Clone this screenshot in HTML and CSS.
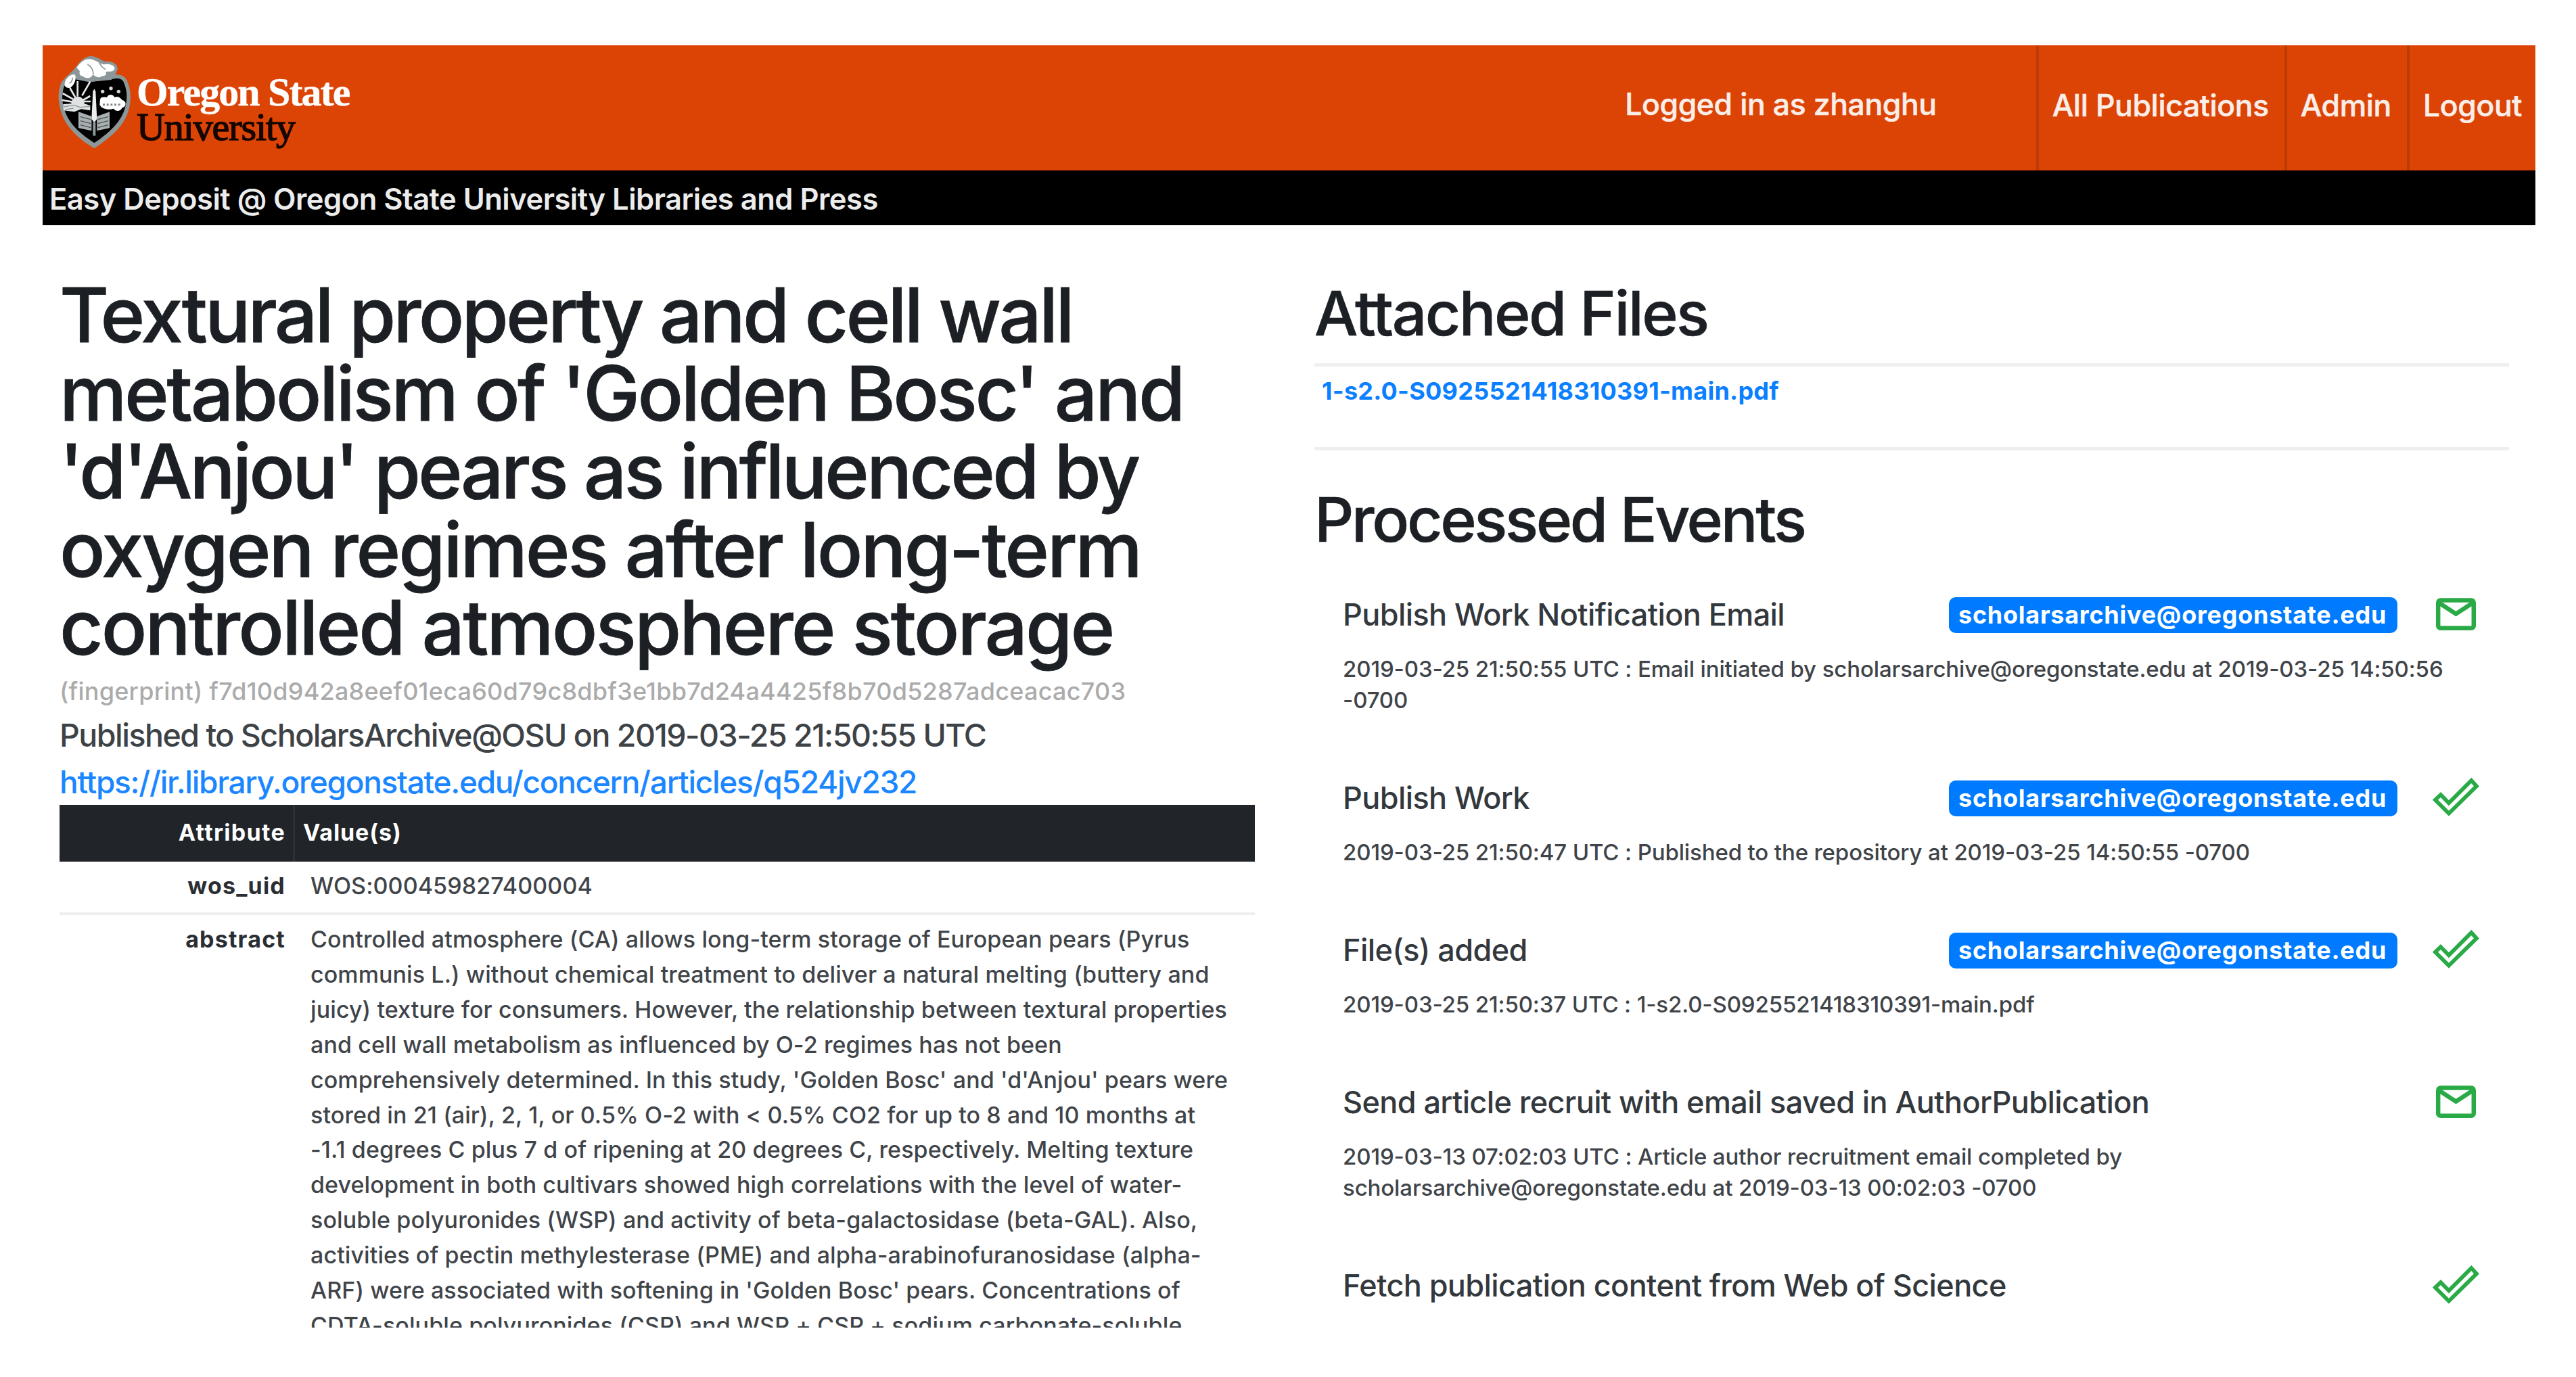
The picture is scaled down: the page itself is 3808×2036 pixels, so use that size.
FILE: index.html
```html
<!DOCTYPE html>
<html lang="en">
<head>
<meta charset="utf-8">
<title>Easy Deposit @ Oregon State University Libraries and Press</title>
<link rel="stylesheet" href="styles.css">
</head>
<body>
<svg class="defs" aria-hidden="true">
  <symbol id="mail" viewBox="0 0 80 70">
    <rect x="14.2" y="13.4" width="52.6" height="41.4" rx="3.5"/>
    <path d="M15 17 40.5 33.6 66 17"/>
  </symbol>
  <symbol id="check" viewBox="0 0 80 70">
    <path d="M10 37.7 18 30 30 42.3 63.3 9 71 17.3 30 57.7Z"/>
  </symbol>
</svg>
<div class="page">
  <header class="topbar">
    <a class="brand">
      <svg class="crest" viewBox="108 68 324 414">
        <path fill="#8b9799" d="M118 200C122 178 150 158 178 130C200 100 222 70 256 71C285 74 300 92 318 95C345 92 372 105 372 128L362 153C385 150 406 160 414 182C428 215 431 245 427 280C415 370 350 425 268 480C185 430 122 370 111 270C108 240 112 220 118 200Z"/>
        <path fill="#000" d="M134 205C150 190 165 180 190 168L250 185 350 172C375 168 392 170 400 190C412 220 414 245 410 275C400 350 345 405 268 456C190 405 138 355 127 270C125 245 128 225 134 205Z"/>
        <path fill="#fff" d="M190 122C205 100 225 82 250 84C275 88 290 105 312 108C340 102 362 115 358 130C350 142 330 138 318 140C325 152 318 160 300 160C292 168 272 166 262 150C258 172 230 172 218 160C205 160 200 150 204 138ZM137 192C140 170 160 152 180 152C192 160 184 200 160 212C142 214 135 204 137 192Z"/>
        <path fill="none" stroke="#8b9799" stroke-width="5" d="M238 108Q262 120 264 150M158 192Q172 182 172 166M290 100Q300 120 318 130"/>
        <path fill="none" stroke="#8b9799" stroke-width="8" d="M185 170 245 182 345 172"/>
        <path fill="none" stroke="#e4e7e7" stroke-width="8" d="M194 182V250M250 184 214 246M160 212 184 254M128 236 174 262M250 248 218 266M124 266 172 274M252 272H214"/>
        <path fill="#dfe2e2" d="M166 282C170 240 222 240 224 282L250 290V312L210 306 180 318 132 312 130 284Z"/>
        <path fill="none" stroke="#8b9799" stroke-width="4" d="M134 296 176 288 206 298 248 294M140 308 176 302"/>
        <path fill="#fff" d="M294 262C300 248 318 254 324 254C330 238 352 238 358 254C376 246 384 258 392 266C412 270 412 296 392 300C382 320 362 316 354 304C332 312 298 304 292 286Z"/>
        <path fill="none" stroke="#888" stroke-width="9" stroke-dasharray="9 8" d="M306 286H386"/>
        <g fill="#d5d9d9"><circle cx="305" cy="228" r="8"/><circle cx="342" cy="214" r="8"/><circle cx="376" cy="228" r="8"/></g>
        <path fill="#a9b0b1" d="M198 318 256 338V402L198 390ZM336 318 280 338V402L336 390Z"/>
        <path fill="none" stroke="#4b5152" stroke-width="4" d="M206 340 252 352M206 358 252 370M206 376 252 388M330 340 284 352M330 358 284 370M330 376 284 388"/>
        <path fill="#eceeee" d="M262 228 268 216 274 228 280 350 268 366 256 350Z"/>
        <path fill="none" stroke="#8b9799" stroke-width="12" d="M268 364V424"/>
      </svg>
      <span class="wordmark"><b>Oregon State</b><span>University</span></span>
    </a>
    <span class="user">Logged in as zhanghu</span>
    <nav class="menu"><a>All Publications</a><a>Admin</a><a>Logout</a></nav>
  </header>
  <div class="subbar">Easy Deposit @ Oregon State University Libraries and Press</div>
  <main class="columns">
    <section class="article">
      <h1><span>Textural property and cell wall</span> <span>metabolism of 'Golden Bosc' and</span> <span>'d'Anjou' pears as influenced by</span> <span>oxygen regimes after long-term</span> <span>controlled atmosphere storage</span></h1>
      <p class="fingerprint">(fingerprint) f7d10d942a8eef01eca60d79c8dbf3e1bb7d24a4425f8b70d5287adceacac703</p>
      <p class="published">Published to ScholarsArchive@OSU on 2019-03-25 21:50:55 UTC</p>
      <a class="permalink">https://ir.library.oregonstate.edu/concern/articles/q524jv232</a>
      <div class="attributes">
        <div class="row head"><div class="name">Attribute</div><div class="value">Value(s)</div></div>
        <div class="row"><div class="name">wos_uid</div><div class="value">WOS:000459827400004</div></div>
        <div class="row"><div class="name">abstract</div><div class="value">Controlled atmosphere (CA) allows long-term storage of European pears (Pyrus<br>communis L.) without chemical treatment to deliver a natural melting (buttery and<br>juicy) texture for consumers. However, the relationship between textural properties<br>and cell wall metabolism as influenced by O-2 regimes has not been<br>comprehensively determined. In this study, 'Golden Bosc' and 'd'Anjou' pears were<br>stored in 21 (air), 2, 1, or 0.5% O-2 with &lt; 0.5% CO2 for up to 8 and 10 months at<br>-1.1 degrees C plus 7 d of ripening at 20 degrees C, respectively. Melting texture<br>development in both cultivars showed high correlations with the level of water-<br>soluble polyuronides (WSP) and activity of beta-galactosidase (beta-GAL). Also,<br>activities of pectin methylesterase (PME) and alpha-arabinofuranosidase (alpha-<br>ARF) were associated with softening in 'Golden Bosc' pears. Concentrations of<br>CDTA-soluble polyuronides (CSP) and WSP + CSP + sodium carbonate-soluble</div></div>
      </div>
    </section>
    <section class="activity">
      <h2>Attached Files</h2>
      <div class="files"><a>1-s2.0-S0925521418310391-main.pdf</a></div>
      <h2>Processed Events</h2>
      <div class="events">
        <article class="event">
          <div class="event-head"><h3>Publish Work Notification Email</h3><span class="badge">scholarsarchive@oregonstate.edu</span><svg class="icon"><use href="#mail"/></svg></div>
          <p>2019-03-25 21:50:55 UTC : Email initiated by scholarsarchive@oregonstate.edu at 2019-03-25 14:50:56<br>-0700</p>
        </article>
        <article class="event">
          <div class="event-head"><h3>Publish Work</h3><span class="badge">scholarsarchive@oregonstate.edu</span><svg class="icon check"><use href="#check"/></svg></div>
          <p>2019-03-25 21:50:47 UTC : Published to the repository at 2019-03-25 14:50:55 -0700</p>
        </article>
        <article class="event">
          <div class="event-head"><h3>File(s) added</h3><span class="badge">scholarsarchive@oregonstate.edu</span><svg class="icon check"><use href="#check"/></svg></div>
          <p>2019-03-25 21:50:37 UTC : 1-s2.0-S0925521418310391-main.pdf</p>
        </article>
        <article class="event">
          <div class="event-head"><h3>Send article recruit with email saved in AuthorPublication</h3><svg class="icon"><use href="#mail"/></svg></div>
          <p>2019-03-13 07:02:03 UTC : Article author recruitment email completed by<br>scholarsarchive@oregonstate.edu at 2019-03-13 00:02:03 -0700</p>
        </article>
        <article class="event">
          <div class="event-head"><h3>Fetch publication content from Web of Science</h3><svg class="icon check"><use href="#check"/></svg></div>
        </article>
      </div>
    </section>
  </main>
</div>
</body>
</html>
```
FILE: styles.css
```css
* { box-sizing: border-box; }
body { margin: 0; background: #fff; color: #1c2025; font-family: Inter, "Liberation Sans", sans-serif; font-weight: 500; white-space: nowrap; }
h1, h2, h3, p { margin: 0; }
.defs { display: none; }
.page { height: 1963px; overflow: hidden; padding: 67px 60px 0 63px; }

/* Header */
.topbar { display: flex; height: 185px; background: #dc4405; color: #fbeee8; font-size: 44.5px; -webkit-text-stroke: 0.5px #fbeee8; letter-spacing: -0.4px; }
.brand { display: flex; flex: 1; padding: 15px 0 0 23px; letter-spacing: 0; }
.crest { width: 108px; height: 138px; flex: none; }
.wordmark { display: flex; flex-direction: column; margin: 28px 0 0 8px; font-family: "Liberation Serif", serif; line-height: 52px; }
.wordmark b { font-size: 60px; color: #fff; letter-spacing: -1.9px; }
.wordmark span { font-size: 58px; font-weight: 400; color: #150600; letter-spacing: -1.1px; -webkit-text-stroke: 1.4px #150600; }
.user { margin: 57px 147px 0 0; line-height: 60px; }
.menu { display: flex; }
.menu a { padding: 59px 23px 0 20px; line-height: 60px; border-left: 4px solid #be3b05; }
.menu a:last-child { padding-right: 20px; }
.subbar { height: 81px; padding-left: 10px; background: #000; color: #ececec; font-size: 43.5px; font-weight: 600; line-height: 84px; letter-spacing: -0.5px; }

/* Two columns */
.columns { display: flex; justify-content: space-between; padding: 75px 39px 0 25px; }
.article { width: 1767px; }
.activity { width: 1766px; }
h1 { font-size: 112px; font-weight: 500; line-height: 115.5px; -webkit-text-stroke: 0.8px #1c2025; }
h1 span { display: block; }
h1 span:nth-child(1) { letter-spacing: -3.8px; }
h1 span:nth-child(2) { letter-spacing: -3.42px; }
h1 span:nth-child(3) { letter-spacing: -3.88px; }
h1 span:nth-child(4) { letter-spacing: -3.13px; }
h1 span:nth-child(5) { letter-spacing: -2.95px; }
.fingerprint { margin-top: 11.5px; color: #ababab; font-size: 36px; line-height: 50px; letter-spacing: 0.23px; }
.published, .permalink { display: block; font-size: 46.5px; line-height: 68.4px; letter-spacing: -1.5px; }
.published { margin-top: 6.2px; color: #3d4246; }
.permalink { color: #1a86ff; font-size: 46px; letter-spacing: -1.27px; }

/* Attribute table */
.attributes { font-size: 34px; line-height: 51.9px; }
.row { display: flex; padding: 10px 0 14px; color: #3f4449; border-top: 4px solid #eceef0; letter-spacing: 0.1px; }
.row .name { width: 334px; font-weight: 700; color: #2a2e33; text-align: right; letter-spacing: 1.2px; }
.row .value { padding-left: 37px; }
.row.head { height: 84px; padding: 0; border: 0; background: #212529; font-weight: 700; line-height: 82px; }
.row.head + .row { border-top: 0; padding-top: 10px; height: 75px; }
.row.head .name, .row.head .value { color: #fff; letter-spacing: 0.9px; }
.row.head .name { letter-spacing: 1.3px; }
.row.head .value { margin-left: 11px; padding-left: 12px; border-left: 3px solid #2b3035; }

/* Files and events */
h2 { font-size: 91px; font-weight: 500; line-height: 110px; letter-spacing: -3.3px; -webkit-text-stroke: 0.6px #1c2025; }
h2:first-child { letter-spacing: -2.55px; }
.files { height: 129px; margin: 19px 0 47px; padding: 9px 0 0 11px; border-top: 5px solid #efefef; border-bottom: 5px solid #efefef; font-size: 36px; font-weight: 700; line-height: 54px; color: #0a7fff; letter-spacing: 0.27px; }
.events { display: flex; flex-direction: column; gap: 92px; padding: 56px 39px 0 42px; }
.event-head { display: flex; align-items: center; height: 60px; }
h3 { flex: 1; font-size: 45px; font-weight: 500; line-height: 60px; letter-spacing: -0.6px; color: #33383d; }
.badge { width: 663px; height: 53px; padding-left: 14px; border-radius: 10px; background: #007bff; color: #fff; font-size: 36px; font-weight: 700; line-height: 53px; letter-spacing: 0.74px; }
.icon { width: 80px; height: 70px; flex: none; margin: -5px 0 -5px 46px; fill: none; stroke: #2aaa46; stroke-width: 6.5; }
.icon.check { stroke-width: 5.8; }
.event p { margin-top: 27px; font-size: 33px; line-height: 46px; color: #3f4449; letter-spacing: -0.13px; }
```
